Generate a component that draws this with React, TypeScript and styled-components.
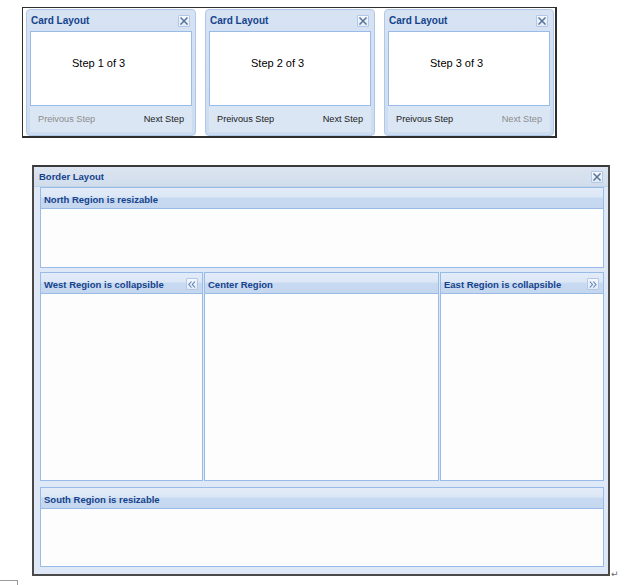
import React from "react";
import styled, { createGlobalStyle, css } from "styled-components";

const Global = createGlobalStyle`
  html, body { margin: 0; padding: 0; background: #ffffff; }
  body { font-family: "Liberation Sans", Arial, sans-serif; }
  * { box-sizing: border-box; }
`;

const Page = styled.div`
  position: relative;
  width: 631px;
  height: 585px;
  overflow: hidden;
  padding-top: 7px;
`;

/* ---------- card wizard strip ---------- */

const CardStrip = styled.div`
  margin-left: 22px;
  width: 535px;
  height: 131px;
  border: 1px solid #2e2e2e;
  border-right-width: 2px;
  border-bottom-width: 2px;
  padding: 1px 0 0 3px;
  display: flex;
  gap: 9px;
  background: #ffffff;
`;

const Card = styled.div`
  width: 170px;
  height: 127px;
  border: 1px solid #b0c8e8;
  border-radius: 4px;
  background: linear-gradient(#d7e3f3, #cddcf0);
  padding: 0 3px 3px 3px;
  display: flex;
  flex-direction: column;
`;

const CardHeader = styled.div`
  height: 21px;
  display: flex;
  align-items: center;
  justify-content: space-between;
  padding: 0 2px 0 1px;
`;

const Title = styled.span<{ $size?: number }>`
  font-family: "Liberation Sans", Arial, sans-serif;
  font-weight: bold;
  font-size: ${(p) => p.$size ?? 10}px;
  color: #15428b;
  white-space: nowrap;
`;

const ToolButton = styled.span`
  width: 12px;
  height: 12px;
  border: 1px solid #b3c8e6;
  border-radius: 1px;
  background: linear-gradient(#f5f8fd, #e1eaf6);
  display: flex;
  align-items: center;
  justify-content: center;
  flex: none;
`;

const CardBody = styled.div`
  flex: 1;
  background: #ffffff;
  border: 1px solid #99bbe8;
  padding: 25px 0 0 41px;
  font-size: 11px;
  color: #000;
`;

const CardFooter = styled.div`
  height: 26px;
  background: #dbe6f5;
  display: flex;
  align-items: center;
  justify-content: space-between;
  padding: 0 8px;
  font-size: 9.2px;
`;

const StepLink = styled.span<{ $disabled?: boolean }>`
  color: ${(p) => (p.$disabled ? "#8c8c8c" : "#1a1a1a")};
  white-space: nowrap;
`;

/* ---------- border layout panel ---------- */

const BottomRow = styled.div`
  display: flex;
  align-items: flex-end;
  margin-top: 27px;
  margin-left: 32px;
`;

const BorderPanel = styled.div`
  width: 578px;
  height: 411px;
  border: 2px solid #4a4a4a;
  border-top-color: #3a3a3a;
  background: #dfe8f6;
  display: flex;
  flex-direction: column;
`;

const PanelTitleBar = styled.div`
  height: 20px;
  flex: none;
  display: flex;
  align-items: center;
  justify-content: space-between;
  padding: 0 5px 0 5px;
  background: linear-gradient(#dbe4f0, #d2ddec);
  border-bottom: 1px solid #c3d3ea;
`;

const PanelBody = styled.div`
  flex: 1;
  display: flex;
  flex-direction: column;
  padding: 0 4px 7px 6px;
`;

const Region = styled.div<{ $h?: number; $w?: number }>`
  display: flex;
  flex-direction: column;
  border: 1px solid #99bbe8;
  background: #fdfdfd;
  ${(p) => (p.$h ? css`height: ${p.$h}px; flex: none;` : "")}
  ${(p) => (p.$w ? css`width: ${p.$w}px; flex: none;` : "")}
`;

const RegionHeader = styled.div`
  height: 21px;
  flex: none;
  display: flex;
  align-items: center;
  justify-content: space-between;
  padding: 2px 4px 0 3px;
  background: linear-gradient(
    #e3ecf8 0%,
    #dce7f6 45%,
    #c8daf1 50%,
    #c4d7ef 100%
  );
  border-bottom: 1px solid #99bbe8;
`;

const RegionBody = styled.div`
  flex: 1;
  background: #fdfdfd;
`;

const MiddleRow = styled.div`
  height: 209px;
  flex: none;
  display: flex;
  gap: 1px;
  margin: 4px 0 6px 0;
`;

const ReturnMark = styled.span`
  font-family: "DejaVu Sans", sans-serif;
  font-size: 9px;
  color: #666;
  margin-left: 1px;
  margin-bottom: -3px;
`;

const CornerMark = styled.div`
  position: absolute;
  left: 0;
  top: 580px;
  width: 18px;
  height: 8px;
  border-top: 1px solid #9a9a9a;
  border-right: 1px solid #9a9a9a;
`;

const CloseIcon = () => (
  <svg width="8" height="8" viewBox="0 0 8 8">
    <path d="M1 1L7 7M7 1L1 7" stroke="#56739b" strokeWidth="1.5" strokeLinecap="square" />
  </svg>
);

const Chevrons = ({ dir }: { dir: "left" | "right" }) => (
  <svg width="8" height="7" viewBox="0 0 8 7">
    {dir === "left" ? (
      <path d="M3.5 0.5L0.8 3.5L3.5 6.5M7 0.5L4.3 3.5L7 6.5" stroke="#5a7fb5" strokeWidth="1.1" fill="none" />
    ) : (
      <path d="M0.8 0.5L3.5 3.5L0.8 6.5M4.3 0.5L7 3.5L4.3 6.5" stroke="#5a7fb5" strokeWidth="1.1" fill="none" />
    )}
  </svg>
);

const steps = [1, 2, 3];

export default function App() {
  return (
    <Page>
      <Global />
      <CardStrip>
        {steps.map((n) => (
          <Card key={n}>
            <CardHeader>
              <Title>Card Layout</Title>
              <ToolButton>
                <CloseIcon />
              </ToolButton>
            </CardHeader>
            <CardBody>Step {n} of 3</CardBody>
            <CardFooter>
              <StepLink $disabled={n === 1}>Preivous Step</StepLink>
              <StepLink $disabled={n === 3}>Next Step</StepLink>
            </CardFooter>
          </Card>
        ))}
      </CardStrip>

      <BottomRow>
        <BorderPanel>
          <PanelTitleBar>
            <Title $size={9.5}>Border Layout</Title>
            <ToolButton>
              <CloseIcon />
            </ToolButton>
          </PanelTitleBar>
          <PanelBody>
            <Region $h={81}>
              <RegionHeader>
                <Title $size={9.5}>North Region is resizable</Title>
              </RegionHeader>
              <RegionBody />
            </Region>
            <MiddleRow>
              <Region $w={163}>
                <RegionHeader>
                  <Title $size={9.5}>West Region is collapsible</Title>
                  <ToolButton>
                    <Chevrons dir="left" />
                  </ToolButton>
                </RegionHeader>
                <RegionBody />
              </Region>
              <Region $w={235}>
                <RegionHeader>
                  <Title $size={9.5}>Center Region</Title>
                </RegionHeader>
                <RegionBody />
              </Region>
              <Region $w={164}>
                <RegionHeader>
                  <Title $size={9.5}>East Region is collapsible</Title>
                  <ToolButton>
                    <Chevrons dir="right" />
                  </ToolButton>
                </RegionHeader>
                <RegionBody />
              </Region>
            </MiddleRow>
            <Region $h={80}>
              <RegionHeader>
                <Title $size={9.5}>South Region is resizable</Title>
              </RegionHeader>
              <RegionBody />
            </Region>
          </PanelBody>
        </BorderPanel>
        <ReturnMark>↵</ReturnMark>
      </BottomRow>
      <CornerMark />
    </Page>
  );
}
